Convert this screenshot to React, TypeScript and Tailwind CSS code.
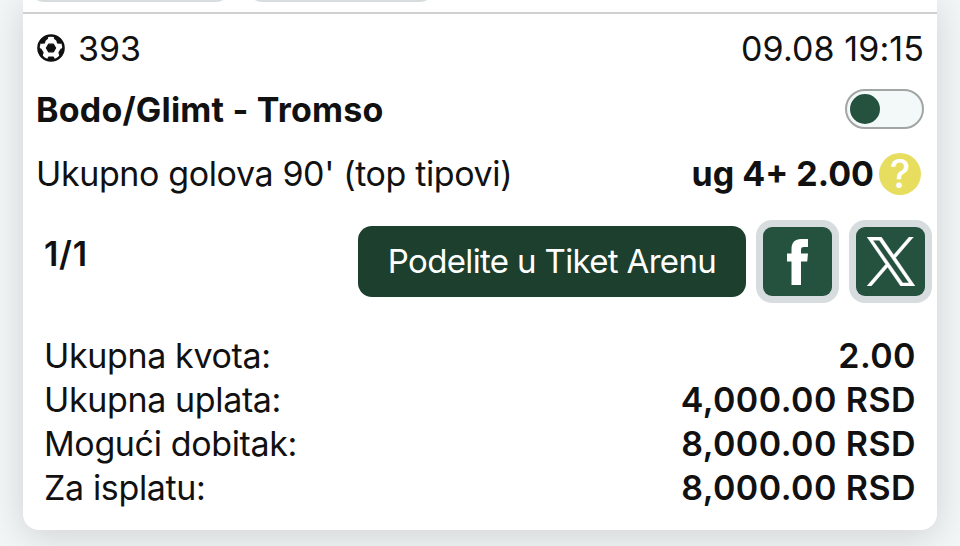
import React from "react";

interface TotalRow {
    label: string;
    value: string;
}

const TOTALS: TotalRow[] = [
    { label: "Ukupna kvota:", value: "2.00" },
    { label: "Ukupna uplata:", value: "4,000.00 RSD" },
    { label: "Mogući dobitak:", value: "8,000.00 RSD" },
    { label: "Za isplatu:", value: "8,000.00 RSD" },
];

const BallIcon: React.FC = () => (
    <svg viewBox="0 0 28 28" className="-mt-0.5 size-7" aria-hidden="true">
        <circle cx="14" cy="14" r="12.5" fill="none" stroke="#111" strokeWidth="2.6" />
        <g fill="#111" stroke="#111" strokeWidth="1.2" strokeLinejoin="round">
            <path d="M11.6 10.2H16.4L18.6 14 16.4 17.8H11.6L9.4 14Z" />
            <path d="M10 2.4 10.6 4.2 8.2 6.2 7.4 9 4.4 9.2 3.4 8Z" />
            <path d="M18 2.4 17.4 4.2 19.8 6.2 20.6 9 23.6 9.2 24.6 8Z" />
            <path d="M1.8 14.4 4 15.4 6 18.6 5.2 21.4 4 21.2Z" />
            <path d="M26.2 14.4 24 15.4 22 18.6 22.8 21.4 24 21.2Z" />
            <path d="M10.4 26 11.8 23H16.2L17.6 26Z" />
        </g>
    </svg>
);

const FacebookIcon: React.FC = () => (
    <svg viewBox="0 0 21 46" className="h-[46px] w-[21px]" fill="#fff" aria-hidden="true">
        <path d="M4.5 46V22.5H0V14.5H4.5V10C4.5 3.5 8 0 14 0H21V8H17C14.6 8 14 9 14 11V14.5H21L20.2 22.5H14V46Z" />
    </svg>
);

const XIcon: React.FC = () => (
    <svg viewBox="0 0 1200 1227" className="h-[49px] w-12" fill="#fff" stroke="#fff" strokeWidth="12" aria-hidden="true">
        <path d="M714.163 519.284L1160.89 0H1055.03L667.137 450.887L357.328 0H0L468.492 681.821L0 1226.37H105.866L515.491 750.218L842.672 1226.37H1200L714.137 519.284H714.163ZM569.165 687.828L521.697 619.934L144.011 79.6944H306.615L611.412 515.685L658.88 583.579L1055.08 1150.3H892.476L569.165 687.854V687.828Z" />
    </svg>
);

const ShareButton: React.FC<{ label: string; children: React.ReactNode }> = ({ label, children }) => (
    <button
        aria-label={label}
        className="flex size-[83px] items-center justify-center rounded-2xl border-[7px] border-[#d7dddf] bg-[#d7dddf]"
    >
        <span className="flex size-full items-center justify-center rounded-[9px] bg-[#25523f]">{children}</span>
    </button>
);

export default function App() {
    return (
        <div className="h-[546px] overflow-hidden bg-[#f3f6f7] px-[23px] font-['Inter',sans-serif] text-[34px] leading-[44px] text-[#111]">
            <div className="flex h-[530px] w-[914px] flex-col rounded-b-[16px] bg-white shadow-[0_6px_36px_rgba(0,0,0,0.15)]">
                {/* TABS */}
                <div className="flex h-3 shrink-0 gap-[18px] pl-[7px]">
                    <div className="-mt-8 h-[34px] w-[200px] rounded-[14px] border-2 border-[#d7dddf]" />
                    <div className="-mt-8 h-[34px] w-[186px] rounded-[14px] border-2 border-[#d7dddf]" />
                </div>
                <div className="h-0.5 shrink-0 bg-[#d0d0d0]" />

                {/* MATCH */}
                <div className="flex h-[69px] shrink-0 items-center justify-between pr-[13px] pl-3.5">
                    <div className="flex items-center gap-[13px]">
                        <BallIcon />
                        <span>393</span>
                    </div>
                    <span className="tracking-[0.1px]">09.08 19:15</span>
                </div>
                <div className="flex h-[53px] shrink-0 items-center justify-between pr-[13px] pl-[13px]">
                    <span className="font-bold tracking-[0.2px]">Bodo/Glimt - Tromso</span>
                    <div className="-mt-0.5 flex h-10 w-[79px] items-center rounded-full border-2 border-[#a1a6a5] bg-[#f3f8f9] pl-[3px]">
                        <div className="size-[30px] rounded-full bg-[#25523f]" />
                    </div>
                </div>
                <div className="flex h-[75px] shrink-0 items-center justify-between pr-4 pl-[13px]">
                    <span className="tracking-[-0.38px]">Ukupno golova 90' (top tipovi)</span>
                    <div className="flex items-center gap-[5px]">
                        <span className="font-bold">ug 4+ 2.00</span>
                        <span className="flex size-[42px] items-center justify-center rounded-full bg-[#e7de60] text-[39px] font-medium text-white">?</span>
                    </div>
                </div>

                {/* SHARE */}
                <div className="flex h-[101px] shrink-0 items-center pr-[5px] pl-[21px]">
                    <span className="-mt-[15px] font-semibold tracking-[0.7px]">1/1</span>
                    <button className="ml-auto h-[71px] w-[388px] rounded-[14px] bg-[#1c3f2e] pb-0.5 text-[33px] tracking-[-0.66px] text-white">
                        Podelite u Tiket Arenu
                    </button>
                    <div className="ml-2.5 flex gap-2.5">
                        <ShareButton label="Facebook">
                            <FacebookIcon />
                        </ShareButton>
                        <ShareButton label="X">
                            <XIcon />
                        </ShareButton>
                    </div>
                </div>

                {/* TOTALS */}
                <div className="flex flex-col pt-[22px] pr-[21px] pl-[21px]">
                    {TOTALS.map((row) => (
                        <div key={row.label} className="flex justify-between">
                            <span className="tracking-[-0.36px]">{row.label}</span>
                            <span className="font-semibold tracking-[0.45px]">{row.value}</span>
                        </div>
                    ))}
                </div>
            </div>
        </div>
    );
}
